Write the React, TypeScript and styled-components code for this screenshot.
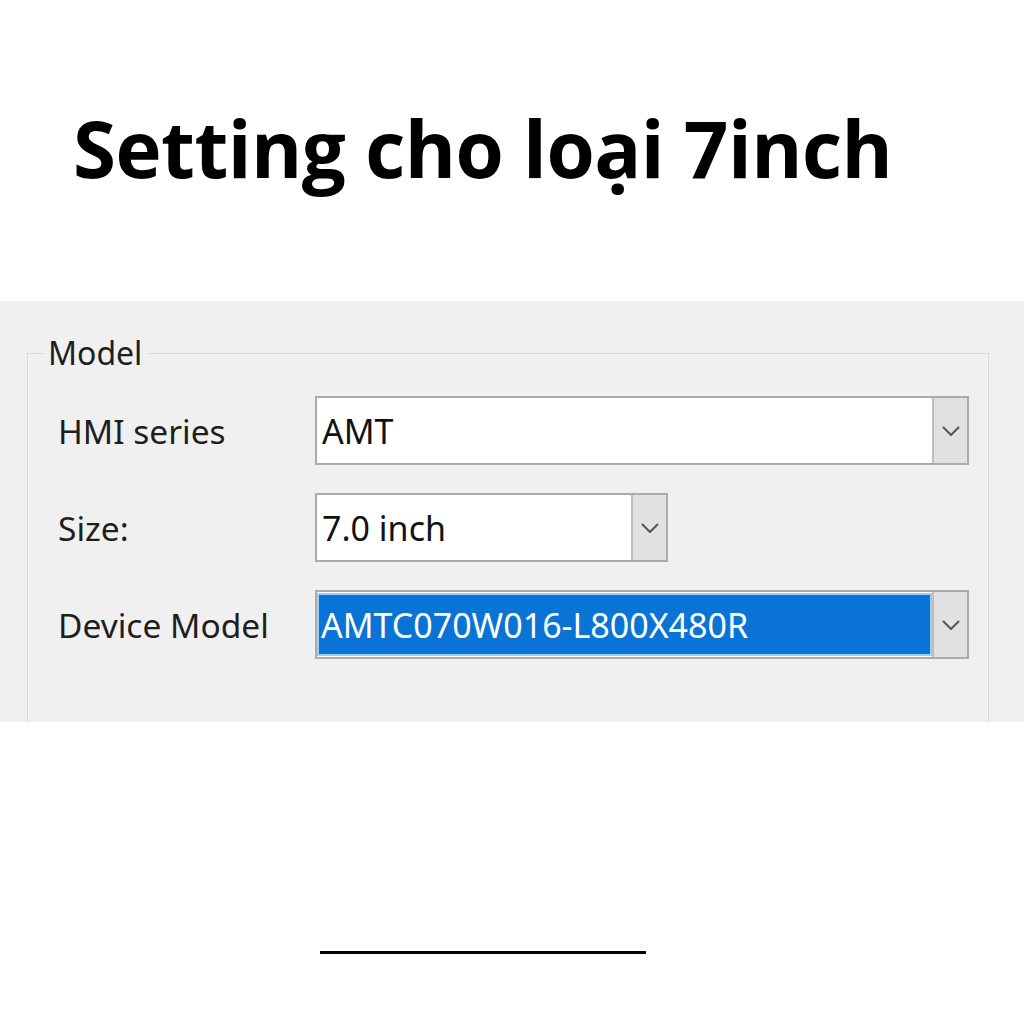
import React from "react";
import styled, { createGlobalStyle } from "styled-components";

const GlobalStyle = createGlobalStyle`
  html, body {
    margin: 0;
    padding: 0;
    background: #fff;
  }
  body {
    font-family: "Noto Sans", "Liberation Sans", sans-serif;
  }
`;

const rows = [
  { label: "HMI series", value: "AMT", width: 654, selected: false },
  { label: "Size:", value: "7.0 inch", width: 353, selected: false },
  { label: "Device Model", value: "AMTC070W016-L800X480R", width: 654, selected: true },
];

const App: React.FC = () => {
  return (
    <Page>
      <GlobalStyle />
      <Title>Setting cho loại 7inch</Title>

      <Panel>
        <GroupBox>
          <Legend>Model</Legend>
          <Rows>
            {rows.map((row) => (
              <Row key={row.label}>
                <Label>{row.label}</Label>
                <Combo $width={row.width}>
                  <ComboValue $selected={row.selected}>{row.value}</ComboValue>
                  <DropButton>
                    <svg width="18" height="10" viewBox="0 0 18 10">
                      <path d="M1 1 L9 9 L17 1" fill="none" stroke="#555" strokeWidth="2" />
                    </svg>
                  </DropButton>
                </Combo>
              </Row>
            ))}
          </Rows>
        </GroupBox>
      </Panel>

      <Underline />
    </Page>
  );
};

export default App;

// styles

const Page = styled.div`
  width: 1024px;
  height: 1024px;
  display: flex;
  flex-direction: column;
  background: #fff;
`;

const Title = styled.h1`
  margin: 88px 0 0 73px;
  font-family: "Open Sans", "Noto Sans", sans-serif;
  font-weight: 700;
  font-size: 78px;
  line-height: 120px;
  height: 120px;
  color: #000;
  letter-spacing: -0.5px;
  white-space: nowrap;
`;

const Panel = styled.div`
  margin-top: 93px;
  height: 421px;
  background: #f0f0f0;
  padding: 0 35px 0 27px;
  display: flex;
`;

const GroupBox = styled.fieldset`
  flex: 1;
  margin: 34px 0 0 0;
  padding: 0 0 0 30px;
  border: 1px solid #d9d9d9;
  border-bottom: none;
  min-width: 0;
`;

const Legend = styled.legend`
  margin-left: -14px;
  padding: 0 6px 0 4px;
  font-size: 32px;
  line-height: 36px;
  color: #1e1e1e;
`;

const Rows = styled.div`
  display: flex;
  flex-direction: column;
  gap: 28px;
  margin-top: 25px;
`;

const Row = styled.div`
  display: grid;
  grid-template-columns: 257px auto;
  align-items: center;
`;

const Label = styled.span`
  font-size: 33.5px;
  color: #1e1e1e;
  white-space: nowrap;
`;

const Combo = styled.div<{ $width: number }>`
  width: ${(p) => p.$width}px;
  height: 69px;
  box-sizing: border-box;
  border: 2px solid #ababab;
  background: #fff;
  display: flex;
`;

const ComboValue = styled.div<{ $selected: boolean }>`
  flex: 1;
  display: flex;
  align-items: center;
  padding-left: ${(p) => (p.$selected ? "2px" : "5px")};
  font-size: 34px;
  color: ${(p) => (p.$selected ? "#fff" : "#111")};
  background: ${(p) => (p.$selected ? "#0a74d6" : "transparent")};
  border: ${(p) => (p.$selected ? "2px solid #9ccdf3" : "none")};
  margin: ${(p) => (p.$selected ? "1px 0 1px 0" : "0")};
  white-space: nowrap;
`;

const DropButton = styled.div`
  width: 33px;
  background: #e1e1e1;
  border-left: 2px solid #bdbdbd;
  display: flex;
  align-items: center;
  justify-content: center;
`;

const Underline = styled.div`
  margin: 229px 0 0 320px;
  width: 326px;
  height: 3px;
  background: #000;
`;
